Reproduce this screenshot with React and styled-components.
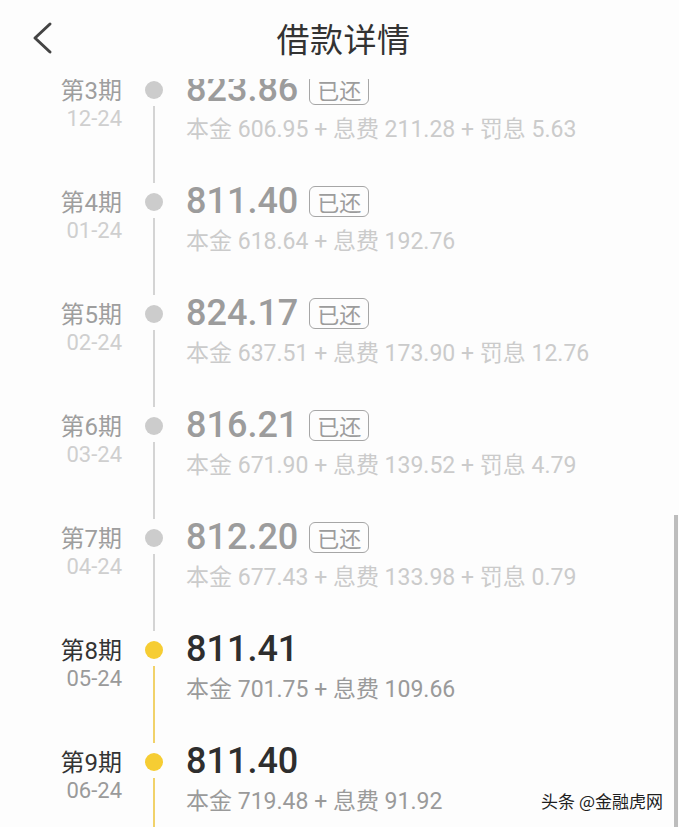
import React from 'react';
import styled, { createGlobalStyle } from 'styled-components';

const GlobalStyle = createGlobalStyle`
  html, body {
    margin: 0;
    padding: 0;
    background: #fdfdfd;
  }
  body {
    font-family: Roboto, "Noto Sans CJK SC", sans-serif;
    -webkit-font-smoothing: antialiased;
  }
`;

const Page = styled.div`
  position: relative;
  height: 827px;
  display: flex;
  flex-direction: column;
  overflow: hidden;
  background: #fdfdfd;
`;

const Header = styled.header`
  height: 79px;
  flex-shrink: 0;
  display: grid;
  grid-template-columns: 1fr auto 1fr;
  align-items: center;
  padding-bottom: 3px;
  box-sizing: border-box;
  position: relative;
  z-index: 1;
  background: #fdfdfd;
`;

const BackButton = styled.button`
  justify-self: start;
  margin-left: 28px;
  width: 28px;
  height: 36px;
  padding: 0;
  border: none;
  background: none;
  display: flex;
  align-items: center;
  justify-content: center;
  cursor: pointer;
`;

const Title = styled.h1`
  margin: 0;
  padding-left: 8px;
  font-size: 33px;
  font-weight: 400;
  color: #333;
  letter-spacing: 0.5px;
`;

const Body = styled.div`
  flex: 1;
  overflow: hidden;
`;

const List = styled.ul`
  list-style: none;
  margin: -8px 0 0;
  padding: 0;
`;

const Row = styled.li`
  height: 112px;
  display: grid;
  grid-template-columns: 122px 64px 1fr;
`;

const PeriodCol = styled.div`
  display: flex;
  flex-direction: column;
  align-items: flex-end;
  padding-top: 8px;
`;

const Period = styled.div`
  font-size: 24px;
  line-height: 24px;
  color: ${p => (p.paid ? '#9e9e9e' : '#333')};
`;

const DueDate = styled.div`
  font-size: 22px;
  line-height: 32px;
  color: ${p => (p.paid ? '#cfcfcf' : '#9a9a9a')};
`;

const TrackCol = styled.div`
  display: flex;
  flex-direction: column;
  align-items: center;
  padding-top: 10px;
`;

const Dot = styled.span`
  width: 18px;
  height: 18px;
  border-radius: 50%;
  flex-shrink: 0;
  background: ${p => (p.paid ? '#cccccc' : '#f6cd33')};
`;

const Track = styled.span`
  flex: 1;
  width: 2px;
  margin-top: 7px;
  background: ${p => (p.paid ? '#d4d4d4' : '#f1d26a')};
`;

const InfoCol = styled.div`
  display: flex;
  flex-direction: column;
`;

const AmountLine = styled.div`
  display: flex;
  align-items: center;
  height: 36px;
`;

const Amount = styled.span`
  font-size: 36px;
  font-weight: 500;
  line-height: 36px;
  color: ${p => (p.paid ? '#9c9c9c' : '#2e2e2e')};
`;

const Tag = styled.span`
  margin-left: 11px;
  height: 31px;
  box-sizing: border-box;
  padding: 0 7px;
  display: inline-flex;
  align-items: center;
  border: 1.5px solid #a6a6a6;
  border-radius: 6px;
  font-size: 22px;
  color: #9c9c9c;
`;

const Detail = styled.div`
  margin-top: 8px;
  font-size: 23px;
  line-height: 30px;
  white-space: nowrap;
  color: ${p => (p.paid ? '#cbcbcb' : '#9a9a9a')};
`;

const ScrollBar = styled.div`
  position: absolute;
  right: 1px;
  top: 515px;
  bottom: 0;
  width: 4px;
  background: #bdbdbd;
`;

const Watermark = styled.div`
  position: absolute;
  right: 16px;
  bottom: 14px;
  font-family: "Noto Sans CJK SC", sans-serif;
  font-size: 17px;
  color: #1e1e1e;
  text-shadow: 1px 1px 0 #fff, -1px 0 0 #fff;
`;

const installments = [
  { period: 3, date: '12-24', amount: '823.86', paid: true, principal: '606.95', fee: '211.28', penalty: '5.63' },
  { period: 4, date: '01-24', amount: '811.40', paid: true, principal: '618.64', fee: '192.76' },
  { period: 5, date: '02-24', amount: '824.17', paid: true, principal: '637.51', fee: '173.90', penalty: '12.76' },
  { period: 6, date: '03-24', amount: '816.21', paid: true, principal: '671.90', fee: '139.52', penalty: '4.79' },
  { period: 7, date: '04-24', amount: '812.20', paid: true, principal: '677.43', fee: '133.98', penalty: '0.79' },
  { period: 8, date: '05-24', amount: '811.41', paid: false, principal: '701.75', fee: '109.66' },
  { period: 9, date: '06-24', amount: '811.40', paid: false, principal: '719.48', fee: '91.92' },
];

const ChevronLeft = () => (
  <svg width="22" height="34" viewBox="0 0 22 34" fill="none">
    <polyline points="19,3 4,17 19,31" stroke="#444" strokeWidth="3" strokeLinecap="round" strokeLinejoin="round" />
  </svg>
);

const App = () => {
  return (
    <Page>
      <GlobalStyle />
      <Header>
        <BackButton aria-label="返回">
          <ChevronLeft />
        </BackButton>
        <Title>借款详情</Title>
        <span />
      </Header>
      <Body>
        <List>
          {installments.map(item => (
            <Row key={item.period}>
              <PeriodCol>
                <Period paid={item.paid}>第{item.period}期</Period>
                <DueDate paid={item.paid}>{item.date}</DueDate>
              </PeriodCol>
              <TrackCol>
                <Dot paid={item.paid} />
                <Track paid={item.paid} />
              </TrackCol>
              <InfoCol>
                <AmountLine>
                  <Amount paid={item.paid}>{item.amount}</Amount>
                  {item.paid && <Tag>已还</Tag>}
                </AmountLine>
                <Detail paid={item.paid}>
                  本金 {item.principal} + 息费 {item.fee}
                  {item.penalty && ` + 罚息 ${item.penalty}`}
                </Detail>
              </InfoCol>
            </Row>
          ))}
        </List>
      </Body>
      <ScrollBar />
      <Watermark>头条 @金融虎网</Watermark>
    </Page>
  );
};

export default App;
